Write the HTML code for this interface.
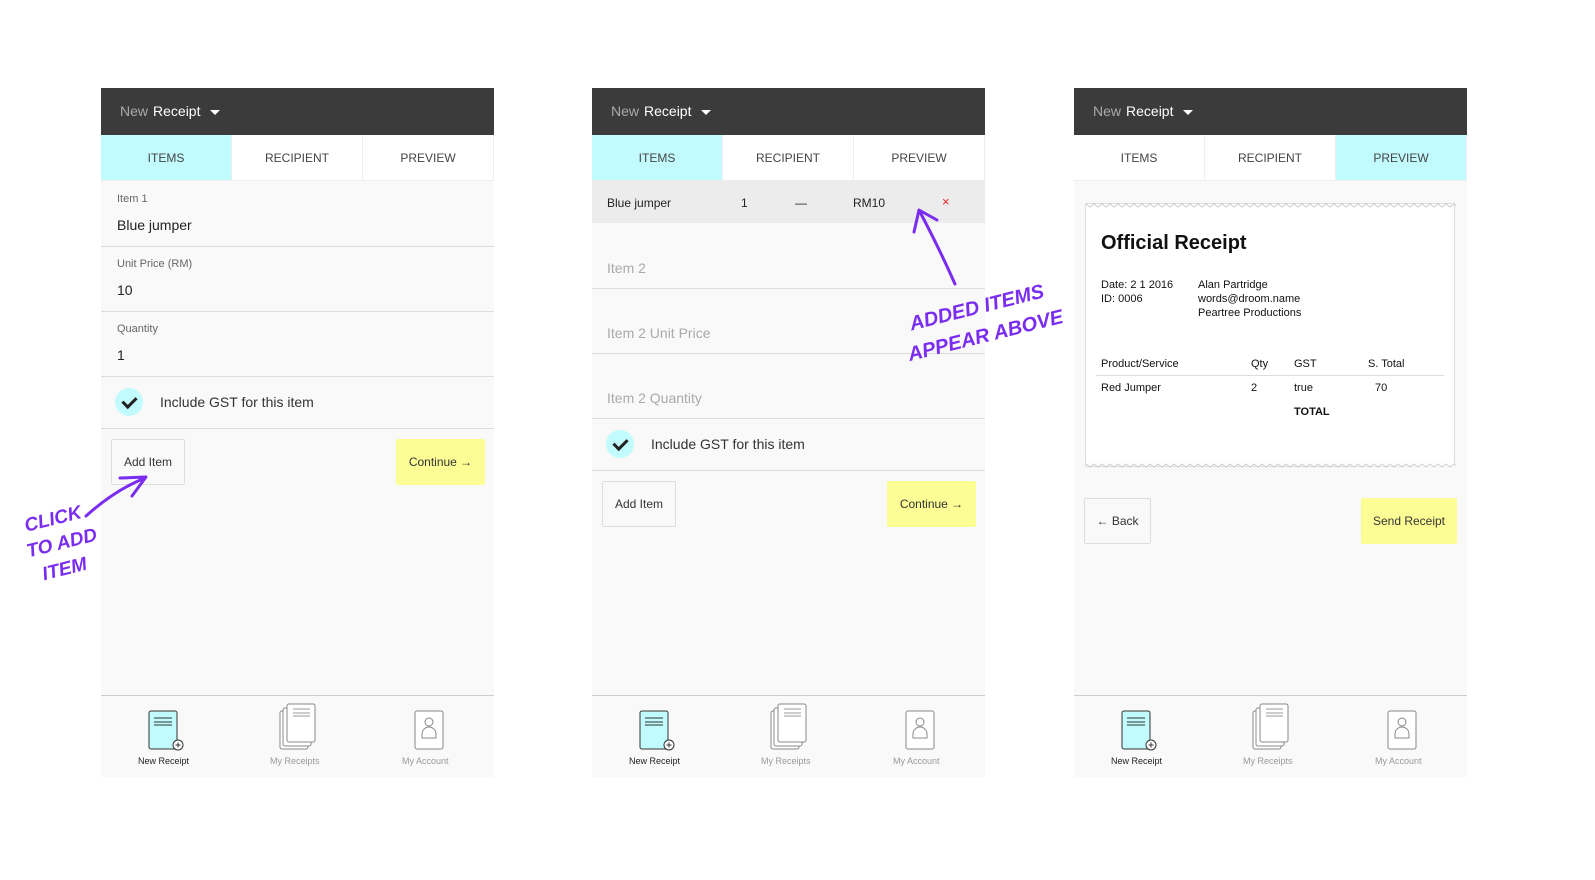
<!DOCTYPE html>
<html><head><meta charset="utf-8"><style>
*{box-sizing:border-box;margin:0;padding:0}
body{width:1595px;height:880px;background:#fff;font-family:"Liberation Sans",sans-serif;position:relative;overflow:hidden}
.p{position:absolute;top:88px;width:393px;height:689px;background:#f9f9f9}
.hd{position:absolute;left:0;top:0;width:393px;height:47px;background:#3b3b3b;color:#fff;font-size:14px}
.ht{position:absolute;left:19px;top:15px;white-space:nowrap}
.n{color:#aaa;margin-right:5px}
.tri{display:inline-block;width:0;height:0;border-left:5px solid transparent;border-right:5px solid transparent;border-top:5px solid #fff;margin-left:10px;vertical-align:middle}
.tabs{position:absolute;top:47px;left:0;width:393px;height:46px;display:flex;background:#fff;border-bottom:1px solid #eee}
.tabs div{flex:1;text-align:center;line-height:46px;font-size:12px;color:#444;border-right:1px solid #eee}
.tabs .a{background:#c2fbfd}
.lbl{position:absolute;left:16px;font-size:11px;color:#666}
.val{position:absolute;left:16px;font-size:14px;color:#222}
.ph{position:absolute;left:15px;font-size:14px;color:#aaa}
.ln{position:absolute;left:0;width:393px;height:1px;background:#ddd}
.chk{position:absolute;left:14px;width:28px;height:28px;border-radius:50%;background:#c2fbfd}
.chk:after{content:"";position:absolute;left:10px;top:6px;width:6px;height:11px;border-right:3px solid #222;border-bottom:3px solid #222;transform:rotate(45deg)}
.gst{position:absolute;left:59px;font-size:14px;color:#333}
.btn{position:absolute;height:46px;border:1px solid #ddd;border-radius:2px;background:#f9f9f9;font-size:12px;color:#333;text-align:center;line-height:44px}
.y{background:#fdfd96;border-color:#fdfd96}
.nav{position:absolute;top:607px;left:0;width:393px;height:82px;border-top:1px solid #ccc;background:#f9f9f9}
.hand{position:absolute;color:#7a2df0;font-family:"Liberation Sans",sans-serif;font-weight:bold;font-style:italic;line-height:1}
</style></head><body>

<div class="p" style="left:101px">
 <div class="hd"><div class="ht"><span class="n">New</span>Receipt<i class="tri"></i></div></div>
 <div class="tabs"><div class="a">ITEMS</div><div>RECIPIENT</div><div>PREVIEW</div></div>
 <div class="lbl" style="top:105px">Item 1</div><div class="val" style="top:129px">Blue jumper</div><div class="ln" style="top:158px"></div>
 <div class="lbl" style="top:170px">Unit Price (RM)</div><div class="val" style="top:194px">10</div><div class="ln" style="top:223px"></div>
 <div class="lbl" style="top:235px">Quantity</div><div class="val" style="top:259px">1</div><div class="ln" style="top:288px"></div>
 <div class="chk" style="top:300px"></div><div class="gst" style="top:306px">Include GST for this item</div><div class="ln" style="top:340px"></div>
 <div class="btn" style="left:10px;top:351px;width:74px">Add Item</div>
 <div class="btn y" style="left:295px;top:351px;width:89px">Continue →</div>
 <div class="nav"></div>
</div>

<div class="p" style="left:592px">
 <div class="hd"><div class="ht"><span class="n">New</span>Receipt<i class="tri"></i></div></div>
 <div class="tabs"><div class="a">ITEMS</div><div>RECIPIENT</div><div>PREVIEW</div></div>
 <div style="position:absolute;top:93px;left:0;width:393px;height:42px;background:#ececec;font-size:12px;color:#222">
  <span style="position:absolute;left:15px;top:15px">Blue jumper</span>
  <span style="position:absolute;left:149px;top:15px">1</span>
  <span style="position:absolute;left:203px;top:15px">—</span>
  <span style="position:absolute;left:261px;top:15px">RM10</span>
  <span style="position:absolute;left:350px;top:13px;color:#e22;font-size:13px">×</span>
 </div>
 <div class="ph" style="top:172px">Item 2</div><div class="ln" style="top:200px"></div>
 <div class="ph" style="top:237px">Item 2 Unit Price</div><div class="ln" style="top:265px"></div>
 <div class="ph" style="top:302px">Item 2 Quantity</div><div class="ln" style="top:330px"></div>
 <div class="chk" style="top:342px"></div><div class="gst" style="top:348px">Include GST for this item</div><div class="ln" style="top:382px"></div>
 <div class="btn" style="left:10px;top:393px;width:74px">Add Item</div>
 <div class="btn y" style="left:295px;top:393px;width:89px">Continue →</div>
 <div class="nav"></div>
</div>

<div class="p" style="left:1074px">
 <div class="hd"><div class="ht"><span class="n">New</span>Receipt<i class="tri"></i></div></div>
 <div class="tabs"><div>ITEMS</div><div>RECIPIENT</div><div class="a">PREVIEW</div></div>
 <div style="position:absolute;left:11px;top:115px;width:370px;height:264px;background:#fff;border:1px solid #ddd;color:#111">
  <div style="position:absolute;left:15px;top:28px;font-size:20px;font-weight:bold">Official Receipt</div>
  <div style="position:absolute;left:15px;top:74px;font-size:11px;line-height:14px">Date: 2 1 2016<br>ID: 0006</div>
  <div style="position:absolute;left:112px;top:74px;font-size:11px;line-height:14px">Alan Partridge<br>words@droom.name<br>Peartree Productions</div>
  <div style="position:absolute;left:15px;top:154px;font-size:11px">Product/Service</div>
  <div style="position:absolute;left:165px;top:154px;font-size:11px">Qty</div>
  <div style="position:absolute;left:208px;top:154px;font-size:11px">GST</div>
  <div style="position:absolute;left:282px;top:154px;font-size:11px">S. Total</div>
  <div style="position:absolute;left:10px;top:171px;width:348px;height:1px;background:#ddd"></div>
  <div style="position:absolute;left:15px;top:178px;font-size:11px">Red Jumper</div>
  <div style="position:absolute;left:165px;top:178px;font-size:11px">2</div>
  <div style="position:absolute;left:208px;top:178px;font-size:11px">true</div>
  <div style="position:absolute;left:289px;top:178px;font-size:11px">70</div>
  <div style="position:absolute;left:208px;top:202px;font-size:11px;font-weight:bold">TOTAL</div>
 </div>
 <div class="btn" style="left:10px;top:410px;width:67px">← Back</div>
 <div class="btn y" style="left:287px;top:410px;width:96px">Send Receipt</div>
 <div class="nav"></div>
</div>

<svg width="1595" height="880" style="position:absolute;left:0;top:0" fill="none">
 <defs>
  <clipPath id="cp"><rect x="1085" y="195" width="371" height="280"/></clipPath>
  <g id="nav">
   <rect x="48" y="623" width="28" height="38" rx="2" fill="#c2fbfd" stroke="#333"/>
   <path d="M53 630h18M53 634h18M53 637h18" stroke="#333"/>
   <circle cx="77" cy="657" r="5" fill="#fff" stroke="#333"/>
   <path d="M74.5 657h5M77 654.5v5" stroke="#333"/>
   <rect x="179" y="623" width="28" height="38" rx="2" fill="#fff" stroke="#888"/>
   <rect x="182" y="620" width="28" height="38" rx="2" fill="#fff" stroke="#888"/>
   <rect x="186" y="616" width="28" height="38" rx="2" fill="#fff" stroke="#888"/>
   <path d="M192 621h17M192 625h17M192 628h17" stroke="#999"/>
   <rect x="314" y="623" width="28" height="38" rx="2" fill="#fff" stroke="#888"/>
   <circle cx="328" cy="634" r="4" stroke="#888"/>
   <path d="M321 650v-4a7 7 0 0 1 14 0v4z" stroke="#888"/>
  </g>
 </defs>
 <use href="#nav" x="101" y="88"/>
 <use href="#nav" x="592" y="88"/>
 <use href="#nav" x="1074" y="88"/>
 <g clip-path="url(#cp)">
 <path d="M1086 204 l4 3 4 -3 4 3 4 -3 4 3 4 -3 4 3 4 -3 4 3 4 -3 4 3 4 -3 4 3 4 -3 4 3 4 -3 4 3 4 -3 4 3 4 -3 4 3 4 -3 4 3 4 -3 4 3 4 -3 4 3 4 -3 4 3 4 -3 4 3 4 -3 4 3 4 -3 4 3 4 -3 4 3 4 -3 4 3 4 -3 4 3 4 -3 4 3 4 -3 4 3 4 -3 4 3 4 -3 4 3 4 -3 4 3 4 -3 4 3 4 -3 4 3 4 -3 4 3 4 -3 4 3 4 -3 4 3 4 -3 4 3 4 -3 4 3 4 -3 4 3 4 -3 4 3 4 -3 4 3 4 -3 4 3 4 -3 4 3 4 -3 4 3 4 -3 4 3 4 -3 4 3 4 -3 4 3 4 -3 4 3 4 -3 4 3 4 -3 4 3 4 -3 4 3 4 -3 4 3 4 -3 4 3 4 -3 4 3 4 -3 4 3" stroke="#ccc"/>
 <path d="M1086 464 l4 3 4 -3 4 3 4 -3 4 3 4 -3 4 3 4 -3 4 3 4 -3 4 3 4 -3 4 3 4 -3 4 3 4 -3 4 3 4 -3 4 3 4 -3 4 3 4 -3 4 3 4 -3 4 3 4 -3 4 3 4 -3 4 3 4 -3 4 3 4 -3 4 3 4 -3 4 3 4 -3 4 3 4 -3 4 3 4 -3 4 3 4 -3 4 3 4 -3 4 3 4 -3 4 3 4 -3 4 3 4 -3 4 3 4 -3 4 3 4 -3 4 3 4 -3 4 3 4 -3 4 3 4 -3 4 3 4 -3 4 3 4 -3 4 3 4 -3 4 3 4 -3 4 3 4 -3 4 3 4 -3 4 3 4 -3 4 3 4 -3 4 3 4 -3 4 3 4 -3 4 3 4 -3 4 3 4 -3 4 3 4 -3 4 3 4 -3 4 3 4 -3 4 3 4 -3 4 3 4 -3 4 3 4 -3 4 3 4 -3 4 3" stroke="#ccc" fill="#fff"/>
 </g>
 <path d="M86 516 Q115 490 145 478 M120 478 L146 477 L132 496" stroke="#7a2df0" stroke-width="3" stroke-linecap="round" stroke-linejoin="round"/>
 <path d="M955 284 Q940 250 920 212 M914 232 L919 210 L937 220" stroke="#7a2df0" stroke-width="3" stroke-linecap="round" stroke-linejoin="round"/>
</svg>

<div style="position:absolute;left:138px;top:756px;font-size:9px;color:#222">New Receipt</div>
<div style="position:absolute;left:270px;top:756px;font-size:9px;color:#999">My Receipts</div>
<div style="position:absolute;left:402px;top:756px;font-size:9px;color:#999">My Account</div>
<div style="position:absolute;left:629px;top:756px;font-size:9px;color:#222">New Receipt</div>
<div style="position:absolute;left:761px;top:756px;font-size:9px;color:#999">My Receipts</div>
<div style="position:absolute;left:893px;top:756px;font-size:9px;color:#999">My Account</div>
<div style="position:absolute;left:1111px;top:756px;font-size:9px;color:#222">New Receipt</div>
<div style="position:absolute;left:1243px;top:756px;font-size:9px;color:#999">My Receipts</div>
<div style="position:absolute;left:1375px;top:756px;font-size:9px;color:#999">My Account</div>

<div class="hand" style="left:24px;top:510px;font-size:19px;transform:rotate(-14deg)">CLICK</div>
<div class="hand" style="left:26px;top:534px;font-size:19px;transform:rotate(-14deg)">TO ADD</div>
<div class="hand" style="left:42px;top:560px;font-size:19px;transform:rotate(-14deg)">ITEM</div>
<div class="hand" style="left:908px;top:298px;font-size:20px;transform:rotate(-14deg)">ADDED ITEMS</div>
<div class="hand" style="left:906px;top:326px;font-size:20px;transform:rotate(-14deg)">APPEAR ABOVE</div>
</body></html>
